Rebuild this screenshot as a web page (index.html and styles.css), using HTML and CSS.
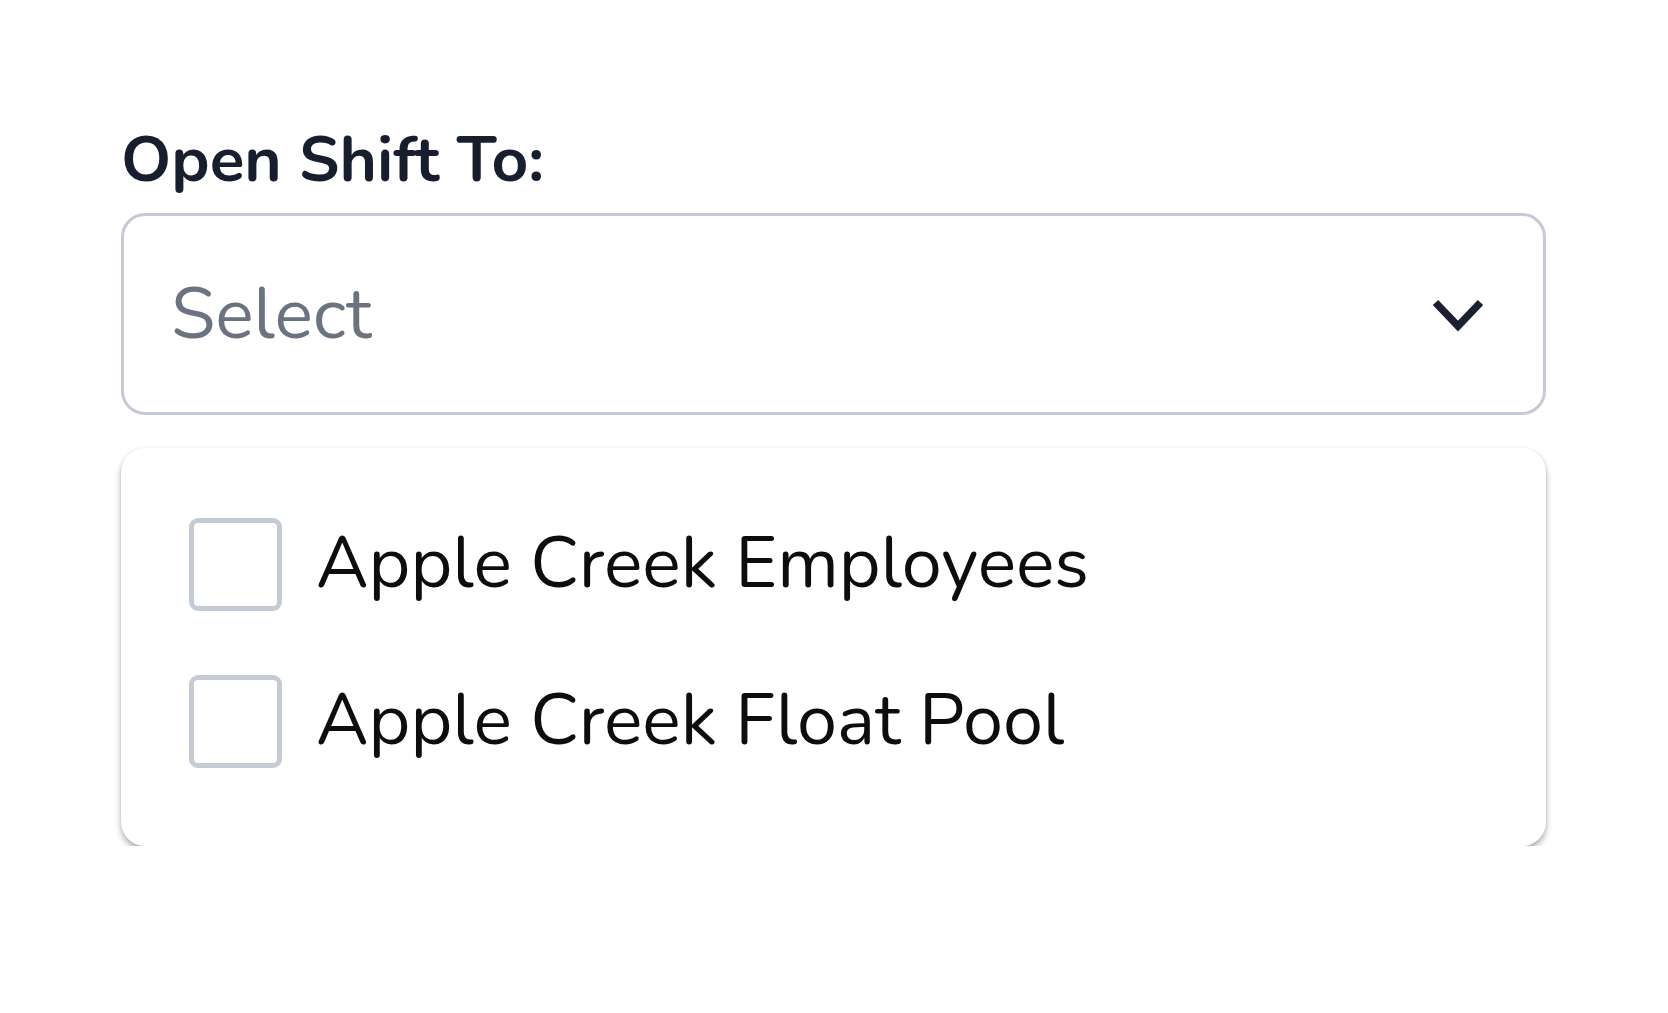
FILE: index.html
```html
<!DOCTYPE html>
<html lang="en">
<head>
<meta charset="utf-8">
<title>Open Shift To</title>
<link rel="stylesheet" href="styles.css">
</head>
<body>
<div class="field">
  <div class="label">Open Shift To:</div>
  <div class="select">
    <span class="placeholder">Select</span>
    <svg class="chevron" width="52" height="34" viewBox="0 0 52 34" aria-hidden="true">
      <path d="M3.5 3.5 L26 27 L48.5 3.5" fill="none" stroke="#1a2030" stroke-width="7.5" stroke-linejoin="miter"/>
    </svg>
  </div>
  <div class="menu">
    <label class="option">
      <span class="box"></span>
      <span class="opt-text">Apple Creek Employees</span>
    </label>
    <label class="option">
      <span class="box"></span>
      <span class="opt-text">Apple Creek Float Pool</span>
    </label>
  </div>
</div>
</body>
</html>
```

FILE: styles.css
```css
html, body {
  margin: 0;
  padding: 0;
  background: #ffffff;
}

body {
  font-family: "Nunito", "Lato", "Noto Sans", sans-serif;
  padding: 128px 0 0 121px;
}

.field {
  width: 1425px;
  display: flex;
  flex-direction: column;
}

.label {
  font-size: 64px;
  line-height: 1;
  font-weight: 700;
  color: #171e2e;
  margin-bottom: 21px;
}

.select {
  box-sizing: border-box;
  height: 202px;
  border: 3px solid #c5cbd4;
  border-radius: 24px;
  display: flex;
  align-items: center;
  justify-content: space-between;
  padding: 0 59px 0 47px;
}

.placeholder {
  font-size: 72px;
  line-height: 1;
  color: #6b7280;
}

.chevron {
  display: block;
  margin-top: 4px;
}

.menu {
  margin-top: 33px;
  box-sizing: border-box;
  height: 398px;
  border-radius: 24px;
  background: #ffffff;
  box-shadow: 0 0 2px rgba(0, 0, 0, 0.08), 0 4px 6px rgba(0, 0, 0, 0.32);
  padding: 70px 0 0 68px;
  display: flex;
  flex-direction: column;
  gap: 64px;
}

.option {
  display: flex;
  align-items: center;
  height: 93px;
}

.box {
  box-sizing: border-box;
  width: 93px;
  height: 93px;
  border: 5px solid #c5cbd4;
  border-radius: 9px;
  flex: none;
}

.opt-text {
  margin-left: 34px;
  padding-bottom: 4px;
  font-size: 72px;
  line-height: 1;
  color: #0d0d0d;
}
```
